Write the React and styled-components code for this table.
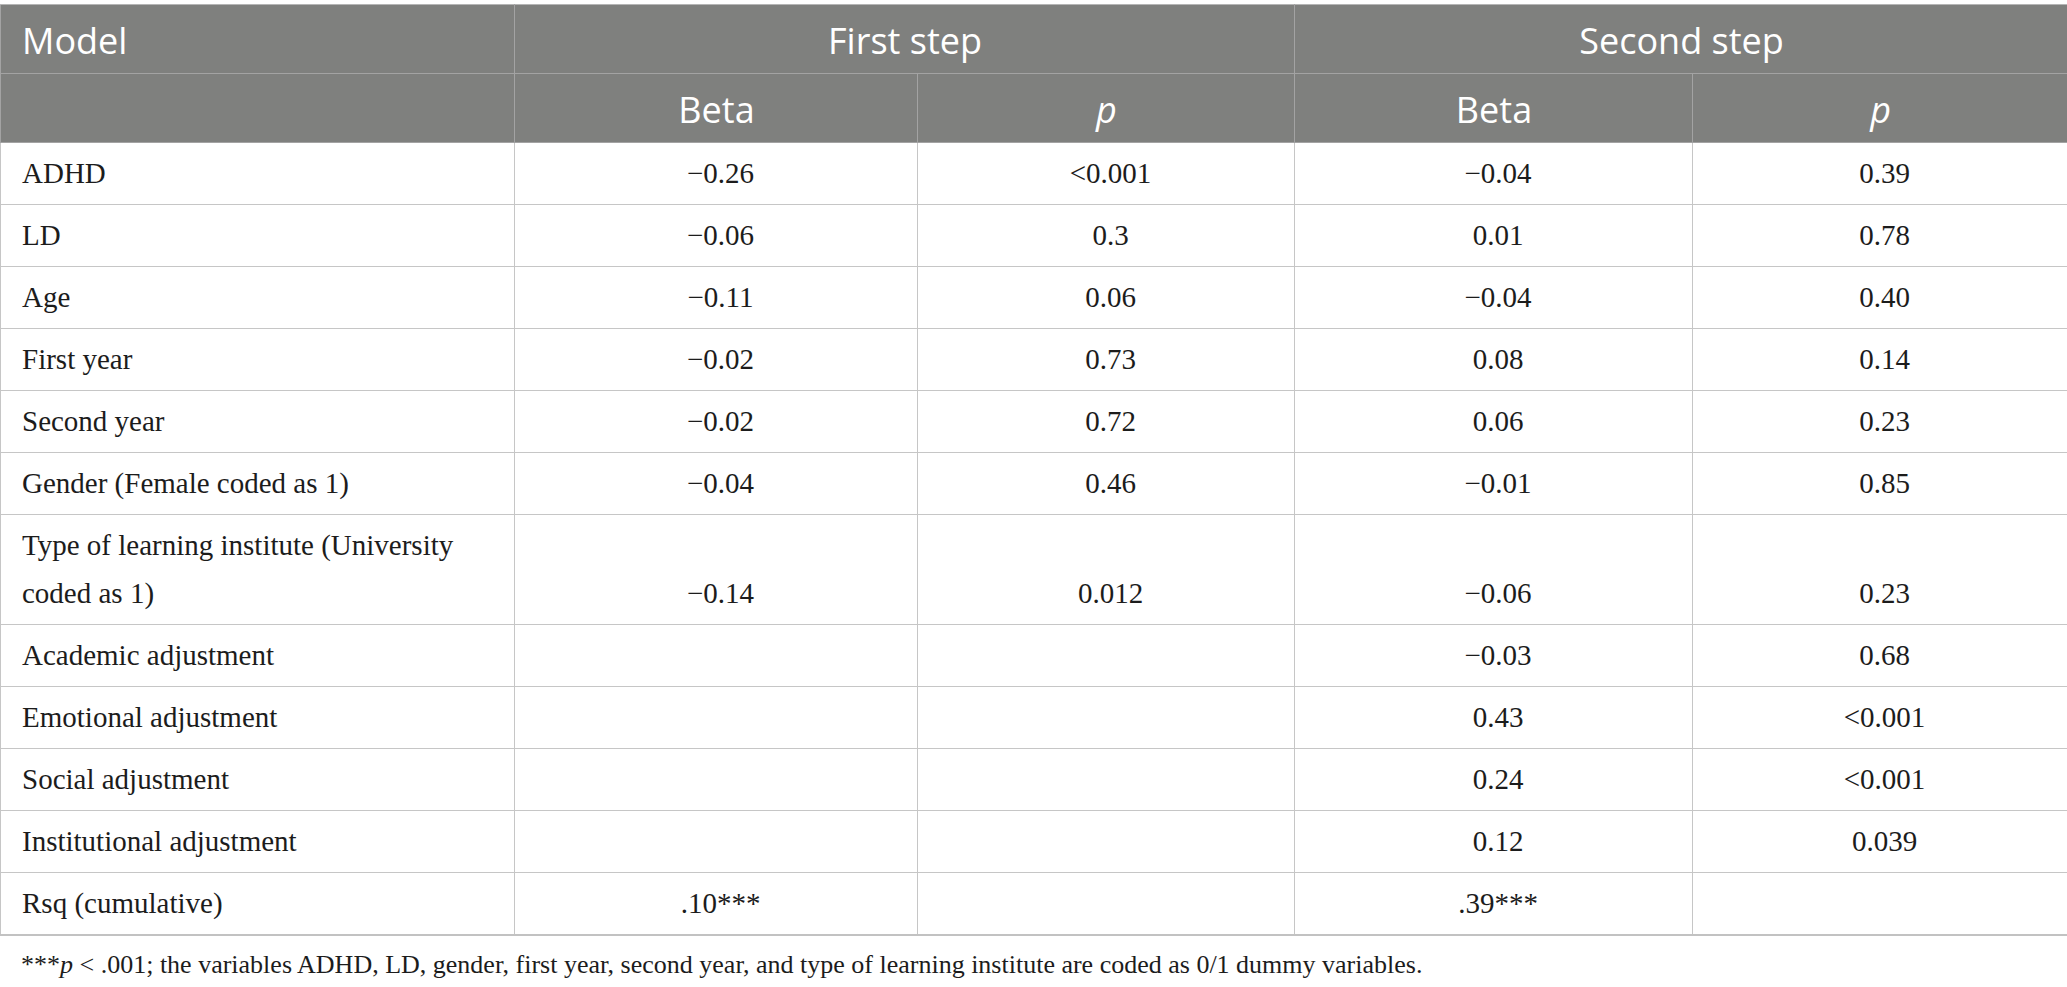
import React from "react";
import styled, { createGlobalStyle } from "styled-components";

const Global = createGlobalStyle`
  html, body { margin: 0; padding: 0; background: #ffffff; }
  body { font-family: "Liberation Serif", "Times New Roman", serif; color: #1a1a1a; }
`;

const Page = styled.div`
  padding-top: 4px;
  width: 2067px;
`;

const Table = styled.table`
  width: 2067px;
  border-collapse: collapse;
  table-layout: fixed;
  border: 1px solid #c2c2c2;
  border-bottom-width: 2px;
`;

const HeadCell = styled.th`
  background: #7f807e;
  color: #ffffff;
  font-family: "Open Sans", "Noto Sans", sans-serif;
  font-weight: 400;
  font-size: 36px;
  line-height: 46px;
  padding: 13px 20px 9px 21px;
  text-align: ${(p) => (p.$left ? "left" : "center")};
  font-style: ${(p) => (p.$italic ? "italic" : "normal")};
  border: 1px solid #a3a3a3;
  border-top-color: #b5b5b5;
`;

const Cell = styled.td`
  font-family: "Liberation Serif", "Times New Roman", serif;
  font-size: 29px;
  line-height: 48px;
  padding: 6px 12px 7px 21px;
  text-align: ${(p) => (p.$left ? "left" : "center")};
  vertical-align: bottom;
  border: 1px solid #c6c6c6;
  color: #1c1c1c;
`;

const Footnote = styled.p`
  margin: 13px 0 0 0;
  padding-left: 21px;
  font-family: "Liberation Serif", "Times New Roman", serif;
  font-size: 26px;
  line-height: 32px;
  color: #1c1c1c;
`;

const I = styled.i`
  font-style: italic;
`;

const rows = [
  ["ADHD", "\u22120.26", "<0.001", "\u22120.04", "0.39"],
  ["LD", "\u22120.06", "0.3", "0.01", "0.78"],
  ["Age", "\u22120.11", "0.06", "\u22120.04", "0.40"],
  ["First year", "\u22120.02", "0.73", "0.08", "0.14"],
  ["Second year", "\u22120.02", "0.72", "0.06", "0.23"],
  ["Gender (Female coded as 1)", "\u22120.04", "0.46", "\u22120.01", "0.85"],
  ["Type of learning institute (University coded as 1)", "\u22120.14", "0.012", "\u22120.06", "0.23"],
  ["Academic adjustment", "", "", "\u22120.03", "0.68"],
  ["Emotional adjustment", "", "", "0.43", "<0.001"],
  ["Social adjustment", "", "", "0.24", "<0.001"],
  ["Institutional adjustment", "", "", "0.12", "0.039"],
  ["Rsq (cumulative)", ".10***", "", ".39***", ""],
];

export default function App() {
  return (
    <Page>
      <Global />
      <Table>
        <colgroup>
          <col style={{ width: 514 }} />
          <col style={{ width: 403 }} />
          <col style={{ width: 377 }} />
          <col style={{ width: 398 }} />
          <col style={{ width: 375 }} />
        </colgroup>
        <thead>
          <tr>
            <HeadCell $left>Model</HeadCell>
            <HeadCell colSpan={2}>First step</HeadCell>
            <HeadCell colSpan={2}>Second step</HeadCell>
          </tr>
          <tr>
            <HeadCell $left></HeadCell>
            <HeadCell>Beta</HeadCell>
            <HeadCell $italic>p</HeadCell>
            <HeadCell>Beta</HeadCell>
            <HeadCell $italic>p</HeadCell>
          </tr>
        </thead>
        <tbody>
          {rows.map((r) => (
            <tr key={r[0]}>
              <Cell $left>{r[0]}</Cell>
              <Cell>{r[1]}</Cell>
              <Cell>{r[2]}</Cell>
              <Cell>{r[3]}</Cell>
              <Cell>{r[4]}</Cell>
            </tr>
          ))}
        </tbody>
      </Table>
      <Footnote>
        ***<I>p</I> &lt; .001; the variables ADHD, LD, gender, first year, second year, and type of learning institute are coded as 0/1 dummy variables.
      </Footnote>
    </Page>
  );
}
